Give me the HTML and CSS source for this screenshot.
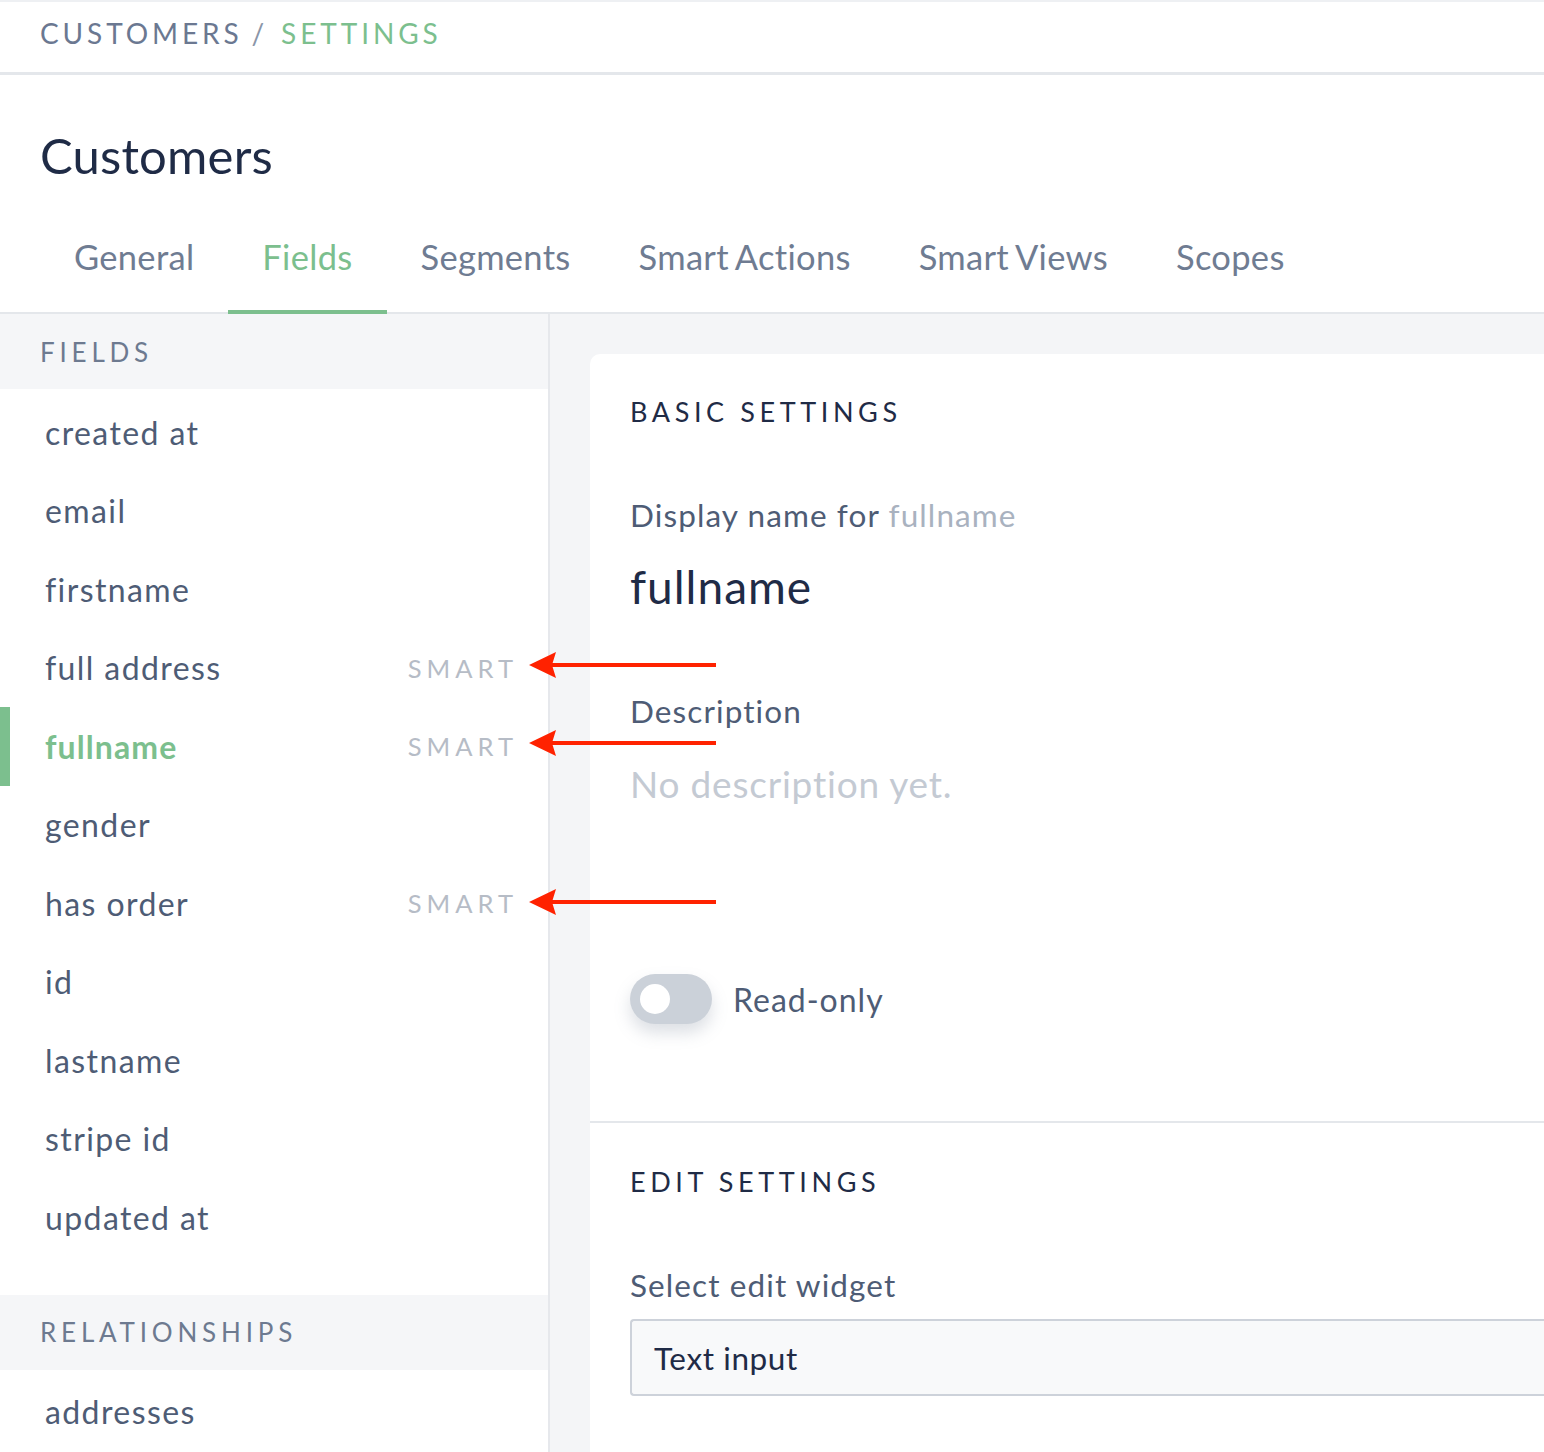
FILE: index.html
```html
<!DOCTYPE html>
<html lang="en">
<head>
<meta charset="utf-8">
<title>Customers / Settings</title>
<link rel="stylesheet" href="styles.css">
</head>
<body>
<div class="page">
  <header class="crumb-bar">
    <span class="crumb">Customers</span>
    <span class="crumb-sep">/</span>
    <span class="crumb crumb-active">Settings</span>
  </header>

  <section class="title-block">
    <h1 class="title">Customers</h1>
    <nav class="tabs">
      <a class="tab">General</a>
      <a class="tab tab-active">Fields</a>
      <a class="tab">Segments</a>
      <a class="tab">Smart Actions</a>
      <a class="tab">Smart Views</a>
      <a class="tab">Scopes</a>
    </nav>
  </section>

  <main class="body">
    <aside class="sidebar">
      <div class="side-head">Fields</div>
      <ul class="field-list">
        <li class="field">created at</li>
        <li class="field">email</li>
        <li class="field">firstname</li>
        <li class="field">full address<span class="smart">Smart</span></li>
        <li class="field field-active">fullname<span class="smart">Smart</span></li>
        <li class="field">gender</li>
        <li class="field">has order<span class="smart">Smart</span></li>
        <li class="field">id</li>
        <li class="field">lastname</li>
        <li class="field">stripe id</li>
        <li class="field">updated at</li>
      </ul>
      <div class="side-head">Relationships</div>
      <ul class="field-list rel-list">
        <li class="field">addresses</li>
      </ul>
    </aside>

    <section class="panel">
      <div class="card">
        <div class="card-section basic">
          <h2 class="section-title">Basic settings</h2>
          <div class="label label-display">Display name for <span class="muted">fullname</span></div>
          <div class="display-value">fullname</div>
          <div class="label label-desc">Description</div>
          <div class="desc-empty">No description yet.</div>
          <div class="toggle-row">
            <span class="toggle"><span class="knob"></span></span>
            <span class="toggle-label">Read-only</span>
          </div>
        </div>
        <div class="card-section edit">
          <h2 class="section-title">Edit settings</h2>
          <div class="label label-widget">Select edit widget</div>
          <div class="select">Text input</div>
        </div>
      </div>
    </section>
  </main>

  <svg class="arrows" width="1544" height="1452" viewBox="0 0 1544 1452" aria-hidden="true">
    <g fill="#ff2200" stroke="#ff2200">
      <line x1="546" y1="665" x2="716" y2="665" stroke-width="4"/>
      <polygon points="529,665 556,652 552,665 556,678" stroke="none"/>
      <line x1="546" y1="743" x2="716" y2="743" stroke-width="4"/>
      <polygon points="529,743 556,730 552,743 556,756" stroke="none"/>
      <line x1="546" y1="902" x2="716" y2="902" stroke-width="4"/>
      <polygon points="529,902 556,889 552,902 556,915" stroke="none"/>
    </g>
  </svg>
</div>
</body>
</html>
```

FILE: styles.css
```css
* { box-sizing: border-box; }
html, body { margin: 0; padding: 0; }
body {
  font-family: "Lato", "Noto Sans", "Liberation Sans", sans-serif;
  color: #4e5c75;
  background: #ffffff;
  width: 1544px;
  height: 1452px;
  overflow: hidden;
}
.page { position: relative; width: 1544px; height: 1452px; overflow: hidden; }

.crumb-bar {
  height: 75px;
  border-top: 2px solid #eef0f3;
  border-bottom: 3px solid #e4e7eb;
  display: flex;
  align-items: center;
  padding-left: 40px;
  padding-bottom: 8px;
  font-size: 28px;
  letter-spacing: 3.9px;
  text-transform: uppercase;
  color: #6b7891;
}
.crumb-sep { margin: 0 13px 0 9px; color: #8a95a8; }
.crumb-active { color: #7cbf8e; }

.title-block { padding-top: 50px; }
.title {
  margin: 0;
  padding-left: 40px;
  font-size: 49px;
  line-height: 60px;
  font-weight: 400;
  color: #1f2b46;
  letter-spacing: 0.2px;
}
.tabs {
  display: flex;
  padding-left: 40px;
  border-bottom: 2px solid #e4e7eb;
}
.tab {
  display: block;
  padding: 52px 34px 33px;
  font-size: 34.5px;
  line-height: 40px;
  letter-spacing: 0.3px;
  word-spacing: -2px;
  color: #6f7c92;
  border-bottom: 4px solid transparent;
  margin-bottom: -2px;
}
.tab-active { color: #7cbf8e; border-bottom-color: #7cbf8e; }

.body {
  display: grid;
  grid-template-columns: 550px 1fr;
  height: 1137px;
}
.sidebar {
  border-right: 2px solid #e6e8ec;
  background: #ffffff;
}
.side-head {
  height: 75px;
  display: flex;
  align-items: center;
  padding-left: 40px;
  background: #f5f6f8;
  font-size: 26px;
  letter-spacing: 4.8px;
  text-transform: uppercase;
  color: #6d7a90;
}
.field-list {
  list-style: none;
  margin: 0;
  padding: 4px 0 38px;
}
.rel-list { padding-top: 3px; }
.field {
  position: relative;
  height: 78.5px;
  display: flex;
  align-items: center;
  justify-content: space-between;
  padding: 0 32px 0 45px;
  font-size: 32px;
  letter-spacing: 1.4px;
  color: #4e5c75;
}
.field-active {
  color: #7cbf8e;
  font-weight: 700;
  letter-spacing: 1.1px;
  box-shadow: inset 10px 0 0 #7cbf8e;
}
.smart {
  font-size: 25.5px;
  font-weight: 400;
  letter-spacing: 5px;
  margin-right: -2px;
  text-transform: uppercase;
  color: #b6bcc6;
}

.panel {
  background: #f4f5f7;
  padding: 40px 0 0 40px;
}
.card {
  background: #ffffff;
  border-radius: 10px 0 0 0;
  height: 100%;
}
.card-section { padding-left: 40px; }
.basic { padding-top: 43px; padding-bottom: 97px; border-bottom: 2px solid #e4e7eb; }
.edit { padding-top: 44px; }
.section-title {
  margin: 0;
  font-size: 27px;
  line-height: 30px;
  font-weight: 400;
  letter-spacing: 4.6px;
  text-transform: uppercase;
  color: #1f2b46;
}
.label {
  font-size: 31.5px;
  line-height: 40px;
  letter-spacing: 1.1px;
  color: #4e5c75;
}
.muted { color: #a9b2bf; }
.label-display { margin-top: 68px; }
.display-value {
  margin-top: 24px;
  font-size: 46px;
  line-height: 56px;
  letter-spacing: 1px;
  color: #1f2b46;
}
.label-desc { margin-top: 76px; }
.desc-empty {
  margin-top: 30px;
  font-size: 37px;
  line-height: 46px;
  letter-spacing: 0.8px;
  color: #c4cad3;
}
.toggle-row {
  margin-top: 167px;
  display: flex;
  align-items: center;
  height: 50px;
}
.toggle {
  position: relative;
  width: 82px;
  height: 50px;
  border-radius: 25px;
  background: #cbd1d9;
  box-shadow: 0 9px 16px rgba(120, 130, 150, 0.25);
  display: flex;
  align-items: center;
  padding-left: 10px;
}
.knob {
  width: 30px;
  height: 30px;
  border-radius: 50%;
  background: #ffffff;
}
.toggle-label {
  margin-left: 21px;
  font-size: 32px;
  letter-spacing: 1px;
  color: #4e5c75;
}
.label-widget { margin-top: 68px; }
.select {
  margin-top: 14px;
  height: 77px;
  border: 2px solid #cdd2da;
  border-right: none;
  border-radius: 4px 0 0 4px;
  background: #f8f9fa;
  display: flex;
  align-items: center;
  padding-left: 22px;
  font-size: 31.5px;
  letter-spacing: 0.6px;
  color: #1f2b46;
}

.arrows {
  position: absolute;
  left: 0;
  top: 0;
  pointer-events: none;
}
```
